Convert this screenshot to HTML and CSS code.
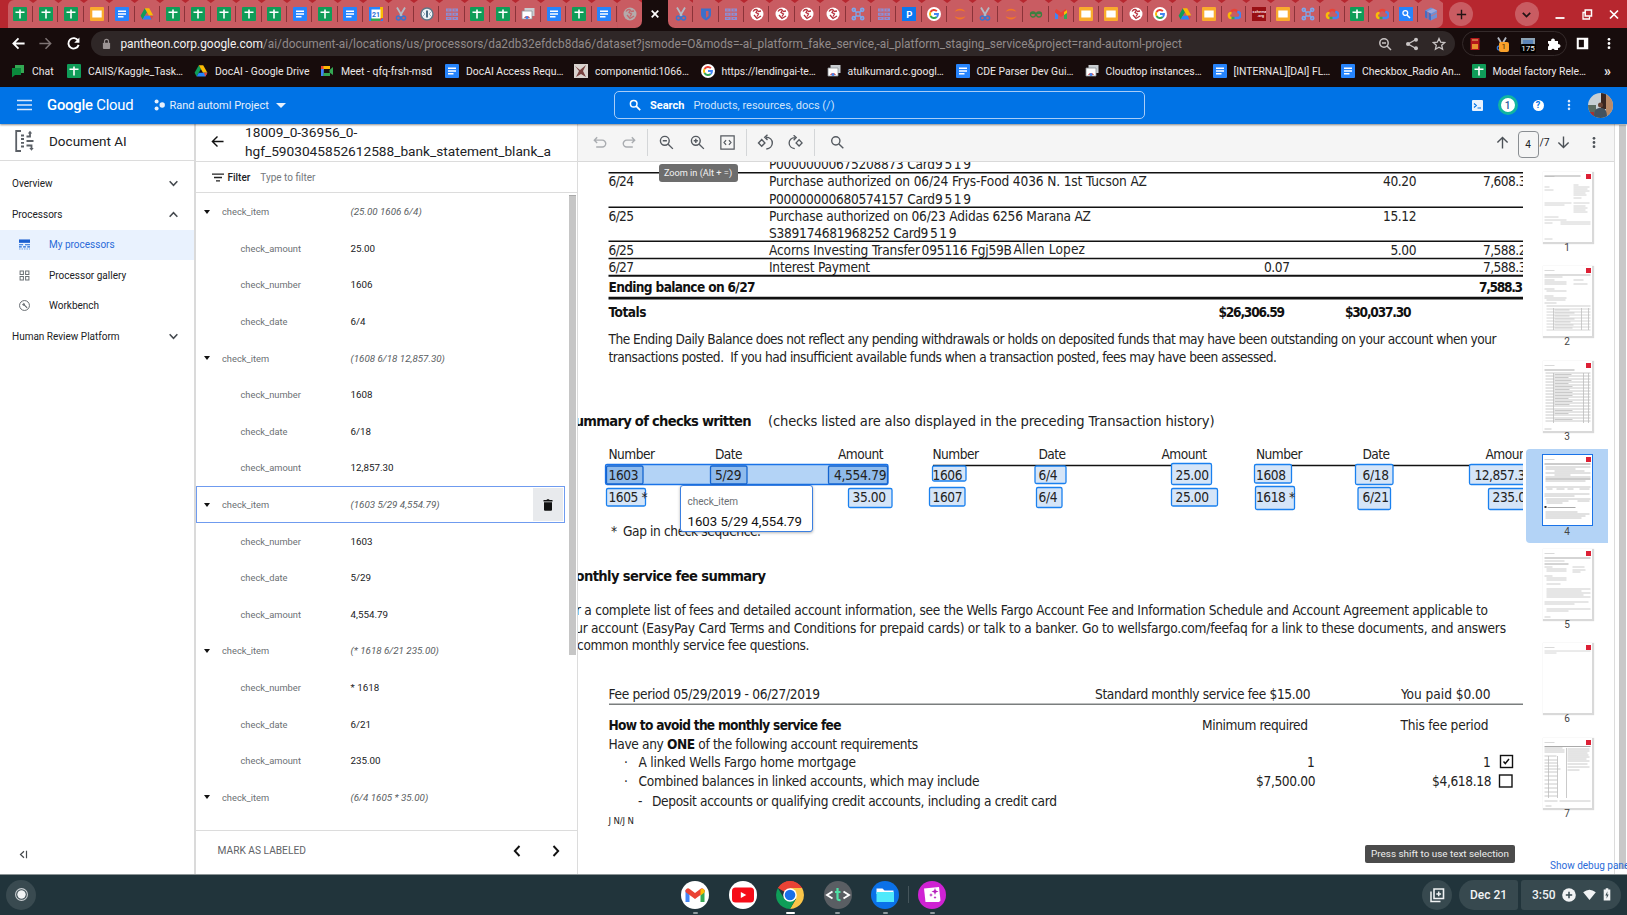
FILE: index.html
```html
<!DOCTYPE html>
<html lang="en">
<head>
<meta charset="utf-8">
<title>Document AI</title>
<link rel="stylesheet" href="styles.css">
</head>
<body>
<svg class="defs" aria-hidden="true">
  <symbol id="sheet" viewBox="0 0 14 14"><rect width="14" height="14" rx="1" fill="#0f9d58"/><path d="M2.5 5.2h9M7 2.5v9" stroke="#fff" stroke-width="1.6"/></symbol>
  <symbol id="docs" viewBox="0 0 14 14"><rect width="14" height="14" rx="1" fill="#2684fc"/><path d="M3 4.2h8M3 7h8M3 9.8h5.5" stroke="#fff" stroke-width="1.4"/></symbol>
  <symbol id="slides" viewBox="0 0 14 14"><rect width="14" height="14" rx="1" fill="#f9ab2d"/><rect x="2.3" y="3.5" width="9.4" height="7" fill="#fff"/></symbol>
  <symbol id="drive" viewBox="0 0 14 14"><path d="M4.8 1.2 0.6 8.8l2 3.6L7 5z" fill="#0f9d58"/><path d="M4.8 1.2h4.4l4.2 7.6H9z" fill="#fbbc04"/><path d="M2.6 12.4 4.8 8.8h8.6l-2 3.6z" fill="#2684fc"/><path d="m9.8 8.8h3.6l-2 3.6z" fill="#ea4335"/></symbol>
  <symbol id="cal" viewBox="0 0 14 14"><path d="M0 0h14v14H0z" fill="#2684fc"/><path d="M11 0h3v11h-3z" fill="#fbbc04"/><path d="M2 11h9v3H2z" fill="#34a853"/><path d="m11 11h3l-3 3z" fill="#ea4335"/><path d="M2.5 2.5h9v9h-9z" fill="#fff"/><text x="3.1" y="9.8" font-size="7" font-weight="700" fill="#2a6fd6">21</text></symbol>
  <symbol id="scissors" viewBox="0 0 14 14"><path d="M3 0.5 8 9M11 0.5 6 9" stroke="#b4bac4" stroke-width="1.8"/><circle cx="4.4" cy="11" r="2" fill="none" stroke="#3975cf" stroke-width="1.4"/><circle cx="9.6" cy="11" r="2" fill="none" stroke="#3975cf" stroke-width="1.4"/></symbol>
  <symbol id="clock" viewBox="0 0 14 14"><circle cx="7" cy="7" r="6" fill="#eef3f6" stroke="#5f7787" stroke-width="1.4"/><path d="M6 3.5h2v7H6z" fill="#4a6a82"/><path d="M2 4 5 7 2 10M12 4 9 7l3 3" stroke="#9db1bf" fill="none"/></symbol>
  <symbol id="grid" viewBox="0 0 14 14"><path d="M1 1.5h12v3H1zM1 5.7h12v3H1zM1 9.9h12v3H1z" fill="#8a8fd6"/><path d="M7 1v12M2.5 3h2M9 3h2M2.5 7.2h2M9 7.2h2M2.5 11.4h2M9 11.4h2" stroke="#d1646f"/></symbol>
  <symbol id="remote" viewBox="0 0 14 14"><path d="M3.5 1h10v8h-10z" fill="#c9cdd1"/><path d="M1 4h10v8H1z" fill="#fff" stroke="#8d9297" stroke-width=".8"/><path d="M3 11a3.2 3.2 0 0 1 6 0z" fill="#ea4335"/><circle cx="6" cy="10.5" r="1.5" fill="#4285f4"/></symbol>
  <symbol id="globe" viewBox="0 0 14 14"><circle cx="7" cy="7" r="6.5" fill="#fff"/><path d="M3 4.5c2-3 4-2 4.500-1L6 5.500l2.500 1.500L7 9.500M8 4.500l3-.5M4 8l3 3.500 4-2.500" stroke="#b8343f" stroke-width="1.300" fill="none"/></symbol>
  <symbol id="globeg" viewBox="0 0 14 14"><circle cx="7" cy="7" r="6.500" fill="#b5aaab"/><path d="M3 4.500c2-3 4-2 4.500-1L6 5.500l2.500 1.500L7 9.500M8 4.500l3-.5M4 8l3 3.500 4-2.500" stroke="#c3696e" stroke-width="1.300" fill="none"/></symbol>
  <symbol id="shield" viewBox="0 0 14 14"><path d="M2 1.500h10v6c0 3-3 5-5 6-2-1-5-3-5-6z" fill="#3d6fc9"/><path d="M7 4h2.500v5L7 11z" fill="#c95b61"/></symbol>
  <symbol id="cmd" viewBox="0 0 14 14"><path d="M5 5h4v4H5zM5 5 2.500 2.500M9 5l2.500-2.500M5 9l-2.500 2.500M9 9l2.500 2.500" stroke="#7ea6ea" stroke-width="1.300" fill="none"/><g fill="none" stroke="#7ea6ea" stroke-width="1.500"><circle cx="2.800" cy="2.800" r="1.600"/><circle cx="11.200" cy="2.800" r="1.600"/><circle cx="2.800" cy="11.200" r="1.600"/><circle cx="11.200" cy="11.200" r="1.600"/></g></symbol>
  <symbol id="pdoc" viewBox="0 0 14 14"><rect width="14" height="14" fill="#0b78f0"/><text x="4.200" y="10.500" font-size="9.500" font-weight="700" fill="#fff">P</text></symbol>
  <symbol id="goog" viewBox="0 0 14 14"><circle cx="7" cy="7" r="7" fill="#fff"/><g fill="none" stroke-width="1.900"><path d="M3.500 5A4 4 0 0 1 9.900 4.200" stroke="#ea4335"/><path d="M3.500 5a4 4 0 0 0 0 4" stroke="#fbbc04"/><path d="M3.500 9a4 4 0 0 0 6.200 1" stroke="#34a853"/><path d="M9.700 10A4 4 0 0 0 11 7H7" stroke="#4285f4"/></g></symbol>
  <symbol id="jup" viewBox="0 0 14 14"><path d="M1.500 5c2-4.500 9-4.500 11 0-3-2-8-2-11 0zM1.500 9c2 4.500 9 4.500 11 0-3 2-8 2-11 0z" fill="#f37726"/></symbol>
  <symbol id="infin" viewBox="0 0 14 14"><g fill="none" stroke="#3b8040" stroke-width="1.300"><circle cx="4" cy="7.500" r="2.500"/><circle cx="10" cy="7.500" r="2.500"/><path d="M1 6.500h12"/></g></symbol>
  <symbol id="gmail" viewBox="0 0 14 14"><path d="M1 3h3v9H1z" fill="#4285f4"/><path d="M10 3h3v9h-3z" fill="#34a853"/><path d="M1 3.500 2.500 2 7 5.500 11.500 2 13 3.500V5.500L7 10 1 5.500z" fill="#ea4335"/><path d="m10 5 3-2v3l-3 2z" fill="#fbbc04"/></symbol>
  <symbol id="cloud" viewBox="0 0 14 14"><g fill="none" stroke-width="2.400"><path d="M4 5c1.500-3 5.500-2.500 6.500 0" stroke="#ea4335"/><path d="M10.300 5a3 3 0 0 1 .5 6H7" stroke="#4285f4"/><path d="M7.500 11H4" stroke="#34a853"/><path d="M4.500 11C1 11 1 6 4.500 6" stroke="#fbbc04"/></g></symbol>
  <symbol id="redbox" viewBox="0 0 14 14"><path d="M0 0h14v14H0z" fill="#990f14"/><text x=".6" y="6" font-size="4" font-weight="700" fill="#f2d9da">schema</text><text x="5" y="10" font-size="4" font-weight="700" fill="#f2d9da">.org</text></symbol>
  <symbol id="lens" viewBox="0 0 14 14"><path d="M0 0h14v14H0z" fill="#2684fc"/><circle cx="6.300" cy="6" r="2.400" fill="none" stroke="#fff" stroke-width="1.300"/><path d="m8 8 3 3" stroke="#fff" stroke-width="1.500"/></symbol>
  <symbol id="cube" viewBox="0 0 14 14"><path d="m7 .5 6 3v7l-6 3-6-3v-7z" fill="#6f8fd6"/><path d="m1 3.500 6 3v7l-6-3z" fill="#456cc0"/><path d="m3 4.500 6-3 4 2-6 3z" fill="#9aa8dc"/><path d="m7 9 6-3M4 5v7" stroke="#c77480"/></symbol>
  <symbol id="chat" viewBox="0 0 14 14"><path d="M4 1h9v8H4z" fill="#34a853"/><path d="M1 4h9v7H4l-3 2.500z" fill="#0a8a3c"/></symbol>
  <symbol id="meet" viewBox="0 0 14 14"><path d="M1 2h3v4H1z" fill="#ea4335"/><path d="M3.500 2H10v3H3.500z" fill="#fbbc04"/><path d="M1 5h2.800v7H1z" fill="#4285f4"/><path d="M3.500 9H10v3H3.500zM9.500 6 13 3v8L9.500 8.500z" fill="#34a853"/></symbol>
  <symbol id="comp" viewBox="0 0 14 14"><path d="M0 0h14v14H0z" fill="#d9d3cf"/><path d="m1 2 5 4 6-5-3 6 3 6-5-3-5 3 3-6z" fill="#77413f"/></symbol>
  <symbol id="chev" viewBox="0 0 10 10"><path d="m1.500 3 3.500 3.700L8.500 3" fill="none" stroke="#454a4f" stroke-width="1.400"/></symbol>
  <symbol id="dots" viewBox="0 0 4 14"><circle cx="2" cy="2.500" r="1.500"/><circle cx="2" cy="7" r="1.500"/><circle cx="2" cy="11.500" r="1.500"/></symbol>
  <symbol id="wf" viewBox="0 0 48 70"><path d="M42.500 2h5v5h-5z" fill="#dd2035"/><path d="M1 4.500h10" stroke="#cfcfcf" stroke-width=".8"/></symbol>
</svg>

<header class="tabstrip">
  <div class="tabs">
    <i class="tab"><svg><use href="#sheet"/></svg></i><i class="tab"><svg><use href="#sheet"/></svg></i><i class="tab"><svg><use href="#sheet"/></svg></i><i class="tab"><svg><use href="#slides"/></svg></i><i class="tab"><svg><use href="#docs"/></svg></i><i class="tab"><svg><use href="#drive"/></svg></i>
    <i class="tab"><svg><use href="#sheet"/></svg></i><i class="tab"><svg><use href="#sheet"/></svg></i><i class="tab"><svg><use href="#sheet"/></svg></i><i class="tab"><svg><use href="#sheet"/></svg></i><i class="tab"><svg><use href="#sheet"/></svg></i><i class="tab"><svg><use href="#docs"/></svg></i><i class="tab"><svg><use href="#sheet"/></svg></i><i class="tab"><svg><use href="#docs"/></svg></i>
    <i class="tab"><svg><use href="#cal"/></svg></i><i class="tab"><svg><use href="#scissors"/></svg></i><i class="tab"><svg><use href="#clock"/></svg></i><i class="tab"><svg><use href="#grid"/></svg></i><i class="tab"><svg><use href="#sheet"/></svg></i><i class="tab"><svg><use href="#sheet"/></svg></i><i class="tab"><svg><use href="#remote"/></svg></i><i class="tab"><svg><use href="#docs"/></svg></i>
    <i class="tab"><svg><use href="#sheet"/></svg></i><i class="tab"><svg><use href="#docs"/></svg></i><i class="tab last"><svg><use href="#globeg"/></svg></i>
    <i class="tab active"><svg viewBox="0 0 14 14"><path d="m3.700 3.700 6.600 6.600M10.300 3.700l-6.600 6.600" stroke="#fff" stroke-width="1.700"/></svg></i>
    <i class="tab first"><svg><use href="#scissors"/></svg></i><i class="tab"><svg><use href="#shield"/></svg></i><i class="tab"><svg><use href="#grid"/></svg></i><i class="tab"><svg><use href="#globe"/></svg></i><i class="tab"><svg><use href="#globe"/></svg></i><i class="tab"><svg><use href="#globe"/></svg></i><i class="tab"><svg><use href="#globe"/></svg></i><i class="tab"><svg><use href="#cmd"/></svg></i>
    <i class="tab"><svg><use href="#grid"/></svg></i><i class="tab"><svg><use href="#pdoc"/></svg></i><i class="tab"><svg><use href="#goog"/></svg></i><i class="tab"><svg><use href="#jup"/></svg></i><i class="tab"><svg><use href="#scissors"/></svg></i><i class="tab"><svg><use href="#jup"/></svg></i><i class="tab"><svg><use href="#infin"/></svg></i><i class="tab"><svg><use href="#gmail"/></svg></i>
    <i class="tab slim"><svg><use href="#slides"/></svg></i><i class="tab slim"><svg><use href="#slides"/></svg></i><i class="tab slim"><svg><use href="#globe"/></svg></i><i class="tab slim"><svg><use href="#goog"/></svg></i><i class="tab slim"><svg><use href="#drive"/></svg></i><i class="tab slim"><svg><use href="#slides"/></svg></i><i class="tab slim"><svg><use href="#cloud"/></svg></i><i class="tab slim"><svg><use href="#redbox"/></svg></i>
    <i class="tab slim"><svg><use href="#slides"/></svg></i><i class="tab slim"><svg><use href="#cmd"/></svg></i><i class="tab slim"><svg><use href="#cloud"/></svg></i><i class="tab slim"><svg><use href="#sheet"/></svg></i><i class="tab slim"><svg><use href="#cloud"/></svg></i><i class="tab slim"><svg><use href="#lens"/></svg></i><i class="tab slim last"><svg><use href="#cube"/></svg></i>
  </div>
  <button class="round"><svg viewBox="0 0 14 14"><path d="M7 2v10M2 7h10" stroke="#231314" stroke-width="1.500"/></svg></button>
  <div class="winctl">
    <button class="round"><svg viewBox="0 0 14 14"><path d="m3 5.200 4 4 4-4" stroke="#231314" stroke-width="1.800" fill="none"/></svg></button>
    <svg viewBox="0 0 14 14"><path d="M2.500 11h9" stroke="#fff" stroke-width="1.800"/></svg>
    <svg viewBox="0 0 14 14"><path d="M5.200 3h6.300v6H5.200z" stroke="#fff" stroke-width="1.500" fill="none"/><path d="M5 5.500H3V12h6.500V9.500" stroke="#fff" stroke-width="1.300" fill="none"/></svg>
    <svg viewBox="0 0 14 14"><path d="m3 3.500 8 8M11 3.500l-8 8" stroke="#fff" stroke-width="1.700"/></svg>
  </div>
</header>

<div class="navbar">
  <svg class="nav-i" viewBox="0 0 16 16"><path d="M14.500 8H2.500M8 2.500 2.500 8 8 13.500" stroke="#fff" stroke-width="1.900" fill="none"/></svg>
  <svg class="nav-i" viewBox="0 0 16 16"><path d="M1.500 8h12M8 2.500 13.500 8 8 13.500" stroke="#7e7474" stroke-width="1.600" fill="none"/></svg>
  <svg class="nav-i" viewBox="0 0 16 16"><path d="M13 5A5.600 5.600 0 1 0 13.500 9.500" stroke="#fff" stroke-width="2" fill="none"/><path d="M14.300 1.500v5.600H8.700z" fill="#fff"/></svg>
  <div class="omnibox">
    <svg class="lock" viewBox="0 0 10 12"><rect x="1" y="4.500" width="8" height="7" rx="1" fill="#9c9494"/><path d="M2.800 5V3a2.200 2.200 0 0 1 4.400 0v2" stroke="#9c9494" stroke-width="1.300" fill="none"/></svg>
    <p class="url"><b>pantheon.corp.google.com</b><span>/ai/document-ai/locations/us/processors/da2db32efdcb8da6/dataset?jsmode=O&amp;mods=-ai_platform_fake_service,-ai_platform_staging_service&amp;project=rand-automl-project</span></p>
    <div class="omni-icons">
      <svg viewBox="0 0 14 14"><g fill="none" stroke="#c9c4c4" stroke-width="1.500"><circle cx="6" cy="6" r="4.200"/><path d="m9 9 4 4M4 6h4"/></g></svg>
      <svg viewBox="0 0 14 14"><path d="M11 2.500 3 7l8 4.500" stroke="#c9c4c4" stroke-width="1.400" fill="none"/><g fill="#c9c4c4"><circle cx="11" cy="2.700" r="2"/><circle cx="3" cy="7" r="2"/><circle cx="11" cy="11.300" r="2"/></g></svg>
      <svg viewBox="0 0 14 14"><path d="m7 1.500 1.700 3.700 4 .4-3 2.700.9 4L7 10.200l-3.600 2.100.9-4-3-2.700 4-.4z" stroke="#c9c4c4" stroke-width="1.300" fill="none"/></svg>
    </div>
  </div>
  <div class="exts">
    <svg viewBox="0 0 14 14"><path d="M2.500 1h9v12h-9z" fill="#b3161b"/><path d="M4 7h6v5H4z" fill="#e8902e"/><path d="M4 3h6" stroke="#e9c26a"/></svg>
    <span class="ext"><svg viewBox="0 0 14 14"><use href="#scissors"/></svg><b class="badge">1</b></span>
    <span class="ext"><svg viewBox="0 0 14 14"><path d="M0 1h14v9H0z" fill="#8ca3b5"/><path d="M2 3h10v5H2z" fill="#5b84b8"/></svg><b class="count">175</b></span>
    <svg viewBox="0 0 14 14"><path d="M1 4h3.200a1.900 1.900 0 1 1 3.600 0H11v3.200a1.900 1.900 0 1 1 0 3.600V13H7.600a1.700 1.700 0 0 0-3.200 0H1V9.600a1.700 1.700 0 0 0 0-3.200z" fill="#fff"/></svg>
  </div>
  <svg class="panel-i" viewBox="0 0 14 14"><path d="M.8.800h12.400v12.400H.8z" fill="#fff"/><path d="M3 3h5.500v8H3z" fill="#170c0c"/></svg>
  <svg class="menu-i" viewBox="0 0 4 14" fill="#fff"><use href="#dots"/></svg>
</div>

<nav class="bookmarks">
  <a><svg><use href="#chat"/></svg>Chat</a>
  <a><svg><use href="#sheet"/></svg>CAIIS/Kaggle_Task…</a>
  <a><svg><use href="#drive"/></svg>DocAI - Google Drive</a>
  <a><svg><use href="#meet"/></svg>Meet - qfq-frsh-msd</a>
  <a><svg><use href="#docs"/></svg>DocAI Access Requ…</a>
  <a><svg><use href="#comp"/></svg>componentid:1066…</a>
  <a><svg><use href="#goog"/></svg>https://lendingai-te…</a>
  <a><svg><use href="#remote"/></svg>atulkumard.c.googl…</a>
  <a><svg><use href="#docs"/></svg>CDE Parser Dev Gui…</a>
  <a><svg><use href="#remote"/></svg>Cloudtop instances…</a>
  <a><svg><use href="#docs"/></svg>[INTERNAL][DAI] FL…</a>
  <a><svg><use href="#docs"/></svg>Checkbox_Radio An…</a>
  <a><svg><use href="#sheet"/></svg>Model factory Rele…</a>
  <b>»</b>
</nav>

<div class="cloudbar">
  <svg class="burger" viewBox="0 0 15 12"><path d="M0 1.500h15M0 6h15M0 10.500h15" stroke="#d9e8fb" stroke-width="1.700"/></svg>
  <div class="brand"><b>Google</b> Cloud</div>
  <div class="project">
    <svg viewBox="0 0 11 12" fill="#e6f0fc"><circle cx="2.600" cy="2.600" r="2"/><circle cx="8.200" cy="6" r="2.700"/><circle cx="2.600" cy="9.400" r="2"/></svg>
    <span>Rand automl Project</span>
    <i class="caret"></i>
  </div>
  <div class="search">
    <svg viewBox="0 0 12 12"><circle cx="4.700" cy="4.700" r="3.300" fill="none" stroke="#fff" stroke-width="1.500"/><path d="m7.200 7.200 4 4" stroke="#fff" stroke-width="1.800"/></svg>
    <b>Search</b><span>Products, resources, docs (/)</span>
  </div>
  <div class="acct">
    <svg class="shell" viewBox="0 0 11 11"><rect width="11" height="11" rx="1" fill="#e9f2fd"/><path d="m2 3.500 2.300 2L2 7.500M5.500 8H9" stroke="#0073e6" stroke-width="1.200" fill="none"/></svg>
    <b class="notif">1</b>
    <b class="help">?</b>
    <svg class="bar-dots" viewBox="0 0 4 14" fill="#dbe9fb"><use href="#dots"/></svg>
    <svg class="avatar" viewBox="0 0 25 25"><clipPath id="av"><circle cx="12.500" cy="12.500" r="12.500"/></clipPath><g clip-path="url(#av)"><path d="M0 0h25v25H0z" fill="#c7cfd4"/><path d="M0 12h8v13H0z" fill="#5b6a5f"/><path d="M13 0h5v16h-5z" fill="#3a2620"/><path d="M18 0h7v25h-7z" fill="#b98a68"/><circle cx="12.500" cy="12" r="2.500" fill="#6a4434"/><path d="M6 25c0-8 2-10 6.500-10s6.500 2 6.500 10z" fill="#43525f"/><path d="M2 19h4v4H2z" fill="#a83030"/></g></svg>
  </div>
</div>

<main class="app">
  <aside class="side">
    <div class="product">
      <svg viewBox="0 0 20 22"><path d="M6 1H1.200v20H6" fill="none" stroke="#5b6066" stroke-width="1.800"/><path d="M6 5.500h3M6 9h3M6 12.800h3M6 16.500h3M11.500 6.500h3.500V2.500M11.500 11h7M11.500 15.500h5v3.500" fill="none" stroke="#5b6066" stroke-width="1.800"/><path d="m12.800 3.500 2.200-2.700 2.200 2.700M14.300 18l2.200 2.700 2.200-2.700" fill="#5b6066"/></svg>
      <span>Document AI</span>
    </div>
    <ul class="menu">
      <li><span>Overview</span><svg><use href="#chev"/></svg></li>
      <li><span>Processors</span><svg class="up"><use href="#chev"/></svg></li>
      <li class="sub on"><svg viewBox="0 0 12 12"><path d="M0 .5h12v3.700H0z" fill="#1a5fd0"/><path d="M0 6.300h4.500M6.500 6.300H12M0 8.600h3M4.500 8.600h3M9 8.600h3" stroke="#1a67d8" stroke-width="1.300"/><path d="M0 10.900h12" stroke="#5a94e6" stroke-dasharray="1.700 1"/></svg><span>My processors</span></li>
      <li class="sub"><svg viewBox="0 0 12 12"><path d="M1.200 1.200h3.600v3.600H1.200zM7.200 1.200h3.600v3.600H7.200zM1.200 7.200h3.600v3.600H1.200zM7.200 7.200h3.600v3.600H7.200z" fill="none" stroke="#6b7075" stroke-width="1.100"/></svg><span>Processor gallery</span></li>
      <li class="sub"><svg viewBox="0 0 12 12"><circle cx="6" cy="6" r="5.400" fill="none" stroke="#5b6066" stroke-width="1"/><path d="m3.800 3 1.700.3 1 1.200-.2.700 3 3-.8.800-3-3-.8.200L3.400 5l.3-.9.800.7.600-.6z" fill="#5b6066"/></svg><span>Workbench</span></li>
      <li><span>Human Review Platform</span><svg><use href="#chev"/></svg></li>
    </ul>
    <svg class="collapse" viewBox="0 0 9 9"><path d="M5 1.200 1.500 4.500 5 7.800M7.500.8v7.400" fill="none" stroke="#45494d" stroke-width="1.200"/></svg>
  </aside>

  <section class="labels">
    <div class="doc-head">
      <svg viewBox="0 0 14 14"><path d="M13.500 7H1.500M7 1.500 1.500 7 7 12.500" fill="none" stroke="#111" stroke-width="1.500"/></svg>
      <h1>18009_0-36956_0-<br>hgf_5903045852612588_bank_statement_blank_a</h1>
    </div>
    <div class="filter">
      <svg viewBox="0 0 12 9"><path d="M0 1.200h12M2 4.500h8M4 7.800h4" stroke="#222" stroke-width="1.300"/></svg>
      <b>Filter</b><span>Type to filter</span>
    </div>
    <div class="rows">
      <div class="row parent"><i class="caret"></i><span>check_item</span><em>(25.00 1606 6/4)</em></div>
      <div class="row"><span>check_amount</span><strong>25.00</strong></div>
      <div class="row"><span>check_number</span><strong>1606</strong></div>
      <div class="row"><span>check_date</span><strong>6/4</strong></div>
      <div class="row parent"><i class="caret"></i><span>check_item</span><em>(1608 6/18 12,857.30)</em></div>
      <div class="row"><span>check_number</span><strong>1608</strong></div>
      <div class="row"><span>check_date</span><strong>6/18</strong></div>
      <div class="row"><span>check_amount</span><strong>12,857.30</strong></div>
      <div class="row parent selected"><i class="caret"></i><span>check_item</span><em>(1603 5/29 4,554.79)</em><button class="trash"><svg viewBox="0 0 10 12"><path d="M.5 1h3L4 .2h2L6.500 1h3v1.400h-9zM1 3.200h8V10.800Q9 11.800 8 11.800H2q-1 0-1-1z" fill="#111"/></svg></button></div>
      <div class="row"><span>check_number</span><strong>1603</strong></div>
      <div class="row"><span>check_date</span><strong>5/29</strong></div>
      <div class="row"><span>check_amount</span><strong>4,554.79</strong></div>
      <div class="row parent"><i class="caret"></i><span>check_item</span><em>(* 1618 6/21 235.00)</em></div>
      <div class="row"><span>check_number</span><strong>* 1618</strong></div>
      <div class="row"><span>check_date</span><strong>6/21</strong></div>
      <div class="row"><span>check_amount</span><strong>235.00</strong></div>
      <div class="row parent"><i class="caret"></i><span>check_item</span><em>(6/4 1605 * 35.00)</em></div>
      <div class="row"><span>check_date</span><strong>6/4</strong></div>
      <i class="scroll"></i>
    </div>
    <div class="label-foot">
      <span>MARK AS LABELED</span>
      <svg viewBox="0 0 8 12"><path d="M6.500 1 1.800 6l4.700 5" fill="none" stroke="#111" stroke-width="1.900"/></svg>
      <svg viewBox="0 0 8 12"><path d="M1.500 1l4.700 5-4.700 5" fill="none" stroke="#111" stroke-width="1.900"/></svg>
    </div>
  </section>

  <section class="viewer">
    <div class="tools">
      <svg viewBox="0 0 16 16" class="t-undo"><path d="M5.500 2.500 2.500 5.500l3 3M2.800 5.500H11a3.400 3.400 0 0 1 0 7.300H4.500" fill="none" stroke="#a9acb0" stroke-width="1.500"/></svg>
      <svg viewBox="0 0 16 16" class="t-redo"><path d="m10.500 2.500 3 3-3 3M13.200 5.500H5a3.400 3.400 0 0 0 0 7.300h6.500" fill="none" stroke="#a9acb0" stroke-width="1.500"/></svg>
      <svg viewBox="0 0 16 16" class="t-out"><g fill="none" stroke="#555a60" stroke-width="1.500"><circle cx="6.200" cy="6.200" r="4.700"/><path d="m9.800 9.800 5 5M4 6.200h4.400"/></g></svg>
      <svg viewBox="0 0 16 16" class="t-in"><g fill="none" stroke="#555a60" stroke-width="1.500"><circle cx="6.200" cy="6.200" r="4.700"/><path d="m9.800 9.800 5 5M4 6.200h4.400M6.200 4v4.400"/></g></svg>
      <svg viewBox="0 0 16 16" class="t-code"><path d="M.9.900h14.200v14.200H.9zM6.500 5.500 4.300 8l2.200 2.500M9.500 5.500 11.700 8l-2.200 2.500" fill="none" stroke="#555a60" stroke-width="1.300"/></svg>
      <svg viewBox="0 0 17 16" class="t-ccw"><path d="m4.700 5 3.200 3.400-3.200 3.400-3.200-3.400zM9 2.800c4 0 6.300 2.500 6.300 5.700s-2.500 5.700-6 6M10.500.2 7.700 2.800l2.800 2.700" fill="none" stroke="#555a60" stroke-width="1.400"/></svg>
      <svg viewBox="0 0 17 16" class="t-cw"><path d="m12.300 5 3.200 3.400-3.200 3.400-3.200-3.400zM8 2.800c-4 0-6.300 2.500-6.300 5.700s2.500 5.700 6 6M6.500.2l2.800 2.600-2.800 2.700" fill="none" stroke="#555a60" stroke-width="1.400"/></svg>
      <svg viewBox="0 0 16 16" class="t-find"><g fill="none" stroke="#555a60" stroke-width="1.500"><circle cx="6.200" cy="6.200" r="4.400"/><path d="m9.500 9.500 4.700 4.700"/></g></svg>
      <div class="pager">
        <svg viewBox="0 0 14 14"><path d="M7 13.500V1.500M1.500 7 7 1.500 12.500 7" fill="none" stroke="#4c5157" stroke-width="1.500"/></svg>
        <span class="page">4</span><span class="of">/7</span>
        <svg viewBox="0 0 14 14"><path d="M7 .5v12M1.500 7 7 12.500 12.500 7" fill="none" stroke="#4c5157" stroke-width="1.500"/></svg>
        <svg class="v-dots" viewBox="0 0 4 14" fill="#4c5157"><use href="#dots"/></svg>
      </div>
    </div>
    <div class="stage">
      <svg class="sheet" viewBox="578 162 944.500 712">
        <g class="rules">
          <path d="M608.500 172.700H1530M608.500 207.300H1530M608.500 241.300H1530M608.500 258.500H1530" stroke-width="1.400"/>
          <path d="M608.500 275.700H1530" stroke-width="2"/>
          <path d="M608.500 298.200H1530" stroke-width="2.800"/>
          <path d="M609 465.500H888M933 465.500H1212M1256.500 465.500H1530" stroke-width="1.300"/>
          <path d="M609 704.200H1530" stroke="#7a7e7e" stroke-width="1.500"/>
        </g>
        <g class="marks">
          <rect class="span" x="605.500" y="464.500" width="282.500" height="20"/>
          <rect class="hit" x="606.500" y="466" width="36.500" height="18"/><rect class="hit" x="710.500" y="466" width="36.500" height="18"/><rect class="hit" x="828.500" y="466" width="59" height="18"/>
          <rect x="606.500" y="488.500" width="39" height="17.500"/><rect x="848.500" y="488.500" width="43.500" height="19"/>
          <rect x="932.500" y="466" width="33.500" height="15"/><rect x="1035" y="466" width="31" height="17.500"/>
          <rect x="929.500" y="487.500" width="35.500" height="18.500"/><rect x="1036.500" y="487.500" width="25.500" height="20"/>
          <rect x="1171.500" y="463.500" width="40" height="21"/><rect x="1171.500" y="488.500" width="46" height="17.500"/>
          <rect x="1254.500" y="464.500" width="37" height="18.500"/><rect x="1255.500" y="486.500" width="39" height="23"/>
          <rect x="1355.500" y="464.500" width="37.500" height="20"/><rect x="1358" y="487.500" width="32.500" height="22"/>
          <rect x="1469.500" y="464.500" width="60" height="20"/><rect x="1488.500" y="488.500" width="40" height="21"/>
        </g>
        <g class="txt">
          <text x="769" y="169" textLength="166">P00000000675208873 Card</text><text x="935" y="169" textLength="36">9519</text>
          <text x="608.500" y="186.300" textLength="25.500">6/24</text><text x="769" y="186.300" textLength="378">Purchase authorized on 06/24 Frys-Food 4036 N. 1st Tucson AZ</text>
          <text x="1383" y="186.300" textLength="33.500">40.20</text><text x="1483" y="186.300" textLength="43.500">7,608.3</text>
          <text x="769" y="203.500" textLength="166">P00000000680574157 Card</text><text x="935" y="203.500" textLength="36">9519</text>
          <text x="608.500" y="220.500" textLength="25.500">6/25</text><text x="769" y="220.500" textLength="322">Purchase authorized on 06/23 Adidas 6256 Marana AZ</text><text x="1383" y="220.500" textLength="33.500">15.12</text>
          <text x="769" y="237.600" textLength="152">S389174681968252 Card</text><text x="920.500" y="237.600" textLength="36">9519</text>
          <text x="608.500" y="254.600" textLength="25.500">6/25</text><text x="769" y="254.600" textLength="151">Acorns Investing Transfer</text><text x="921.500" y="254.600" textLength="46">095116</text><text x="971" y="254.600" textLength="41">Fgj59B</text><text x="1013.500" y="254.300" textLength="71.500">Allen Lopez</text>
          <text x="1390.500" y="254.600" textLength="26">5.00</text><text x="1483" y="254.600" textLength="43.500">7,588.2</text>
          <text x="608.500" y="271.800" textLength="25.500">6/27</text><text x="769" y="271.800" textLength="101">Interest Payment</text><text x="1264" y="271.800" textLength="26">0.07</text><text x="1483" y="271.800" textLength="43.500">7,588.3</text>
          <g class="b"><text x="608.500" y="292.300" textLength="147">Ending balance on 6/27</text><text x="1479" y="292.300" textLength="44">7,588.3</text><text x="608.500" y="316.600" textLength="38">Totals</text><text x="1218.500" y="316.600" textLength="66.500">$26,306.59</text><text x="1345" y="316.600" textLength="66.500">$30,037.30</text></g>
          <text x="608.500" y="344.400" textLength="888">The Ending Daily Balance does not reflect any pending withdrawals or holds on deposited funds that may have been outstanding on your account when your</text>
          <text x="608.500" y="361.700" textLength="668.500" xml:space="preserve">transactions posted.  If you had insufficient available funds when a transaction posted, fees may have been assessed.</text>
          <g class="h"><text class="b" x="566" y="426" textLength="185.500">Summary of checks written</text><text x="768" y="426" textLength="446.500">(checks listed are also displayed in the preceding Transaction history)</text></g>
          <text x="608.500" y="459.400" textLength="46.500">Number</text><text x="715" y="459.400" textLength="27.500">Date</text><text x="838" y="459.400" textLength="45.500">Amount</text>
          <text x="932.500" y="459.400" textLength="46.500">Number</text><text x="1038.500" y="459.400" textLength="27.500">Date</text><text x="1161.500" y="459.400" textLength="45.500">Amount</text>
          <text x="1256" y="459.400" textLength="46.500">Number</text><text x="1362.500" y="459.400" textLength="27.500">Date</text><text x="1485.500" y="459.400" textLength="45.500">Amount</text>
          <text x="608.500" y="480" textLength="30">1603</text><text x="715" y="480" textLength="26.500">5/29</text><text x="834" y="480" textLength="52.500">4,554.79</text>
          <text x="932.500" y="480" textLength="30">1606</text><text x="1038.500" y="480" textLength="19">6/4</text><text x="1175.500" y="480" textLength="33.500">25.00</text>
          <text x="1256" y="480" textLength="30">1608</text><text x="1362.500" y="480" textLength="26.500">6/18</text><text x="1474.500" y="480" textLength="51">12,857.3</text>
          <text x="608.500" y="502.400" textLength="39">1605 *</text><text x="852.500" y="502.400" textLength="33.500">35.00</text>
          <text x="932.500" y="502.400" textLength="30">1607</text><text x="1038.500" y="502.400" textLength="19">6/4</text><text x="1175.500" y="502.400" textLength="33.500">25.00</text>
          <text x="1256" y="502.400" textLength="39">1618 *</text><text x="1362.500" y="502.400" textLength="26.500">6/21</text><text x="1492.500" y="502.400" textLength="33.500">235.0</text>
          <text x="611" y="535.600">*</text><text x="623" y="535.600" textLength="138">Gap in check sequence.</text>
          <text class="h b" x="563" y="581.400" textLength="203">Monthly service fee summary</text>
          <text x="562.500" y="615.200" textLength="925.500">For a complete list of fees and detailed account information, see the Wells Fargo Account Fee and Information Schedule and Account Agreement applicable to</text>
          <text x="562.500" y="632.500" textLength="943.500">Your account (EasyPay Card Terms and Conditions for prepaid cards) or talk to a banker. Go to wellsfargo.com/feefaq for a link to these documents, and answers</text>
          <text x="562.500" y="649.600" textLength="247">of common monthly service fee questions.</text>
          <text x="608.500" y="699.300" textLength="211.500">Fee period 05/29/2019 - 06/27/2019</text><text x="1095" y="699.300" textLength="215.500">Standard monthly service fee $15.00</text><text x="1401" y="699.300" textLength="89.500">You paid $0.00</text>
          <text class="b" x="608.500" y="730.300" textLength="233">How to avoid the monthly service fee</text><text x="1202" y="729.700" textLength="106">Minimum required</text><text x="1400.500" y="729.700" textLength="88">This fee period</text>
          <text x="608.500" y="748.700" textLength="309.500">Have any <tspan class="b">ONE</tspan> of the following account requirements</text>
          <text x="624" y="766.700">·</text><text x="638.500" y="766.700" textLength="217.500">A linked Wells Fargo home mortgage</text><text x="1307" y="766.700" textLength="7.500">1</text><text x="1483" y="766.700" textLength="7.500">1</text>
          <text x="624" y="785.700">·</text><text x="638.500" y="785.700" textLength="341">Combined balances in linked accounts, which may include</text><text x="1256" y="785.700" textLength="59.500">$7,500.00</text><text x="1432" y="785.700" textLength="59.500">$4,618.18</text>
          <text x="638" y="806">-</text><text x="652" y="806" textLength="405">Deposit accounts or qualifying credit accounts, including a credit card</text>
          <text class="s" x="608.500" y="823.700" textLength="25.500">J N/J N</text>
        </g>
        <g fill="none" stroke="#111" stroke-width="1.400"><rect x="1500.500" y="755.500" width="12" height="12"/><rect x="1499.500" y="775" width="12.500" height="12"/></g>
        <path d="m1503.500 761.500 1.800 2 3.700-4.500" fill="none" stroke="#111" stroke-width="1.500"/>
      </svg>
      <div class="entity"><small>check_item</small><span>1603 5/29 4,554.79</span></div>
      <div class="hint">Press shift to use text selection</div>
      <ol class="thumbs">
        <li><svg viewBox="0 0 48 70"><use href="#wf"/><path d="M1 4h36" stroke="#aaa"/><g stroke="#c6c6c6" stroke-width=".8"><path d="M1 15h5M1 18h9M30 13h5M30 15h16M30 17h14M30 19h16M30 21h12M30 23h13M30 26h8M1 31h27M1 33h20M30 31h16M30 34h12M30 36h14M30 38h12M30 40h14M1 45h14M1 48h22M1 51h8M17 50h30M17 52h30M1 67h8"/></g></svg>1</li>
        <li><svg viewBox="0 0 48 70"><use href="#wf"/><path d="M1 9h46" stroke="#bbb"/><g stroke="#c0c0c0" stroke-width=".8"><path d="M1 11h18M1 14h10M1 16h22M1 18h22M30 14h10M30 18h14M1 23h10M3 25h20M1 30h9M1 32h22M3 34h19M1 37h12M3 40h44"/><path d="M3 43h44M3 46h44M3 49h44M3 52h44M3 55h44M3 58h44M3 61h44M3 64h44" stroke="#ccc"/><path d="M11 44h15M11 47h20M11 50h15M11 53h20M11 56h16M11 59h19M11 62h18M38 42v22M45 42v22M10 42v22"/></g></svg>2</li>
        <li><svg viewBox="0 0 48 70"><use href="#wf"/><path d="M1 9h30" stroke="#aaa"/><g stroke="#bdbdbd" stroke-width=".8"><path d="M2 12h45M2 15h45M2 18h45M2 21h45M2 24h45M2 27h45M2 30h45M2 33h45M2 36h45M2 39h45M2 42h45M2 45h45M2 48h45M2 51h45M2 54h45M2 57h45M2 60h45"/><path d="M11 13.500h17M11 16.500h14M11 19.500h17M11 22.500h14M11 25.500h18M11 28.500h15M11 31.500h18M11 34.500h18M11 37.500h14M11 40.500h18M11 43.500h15M11 49.500h18M11 52.500h14M11 58.500h18M10 12v50M40 12v50M45 12v50M1 68h7"/></g></svg>3</li>
        <li class="cur"><svg viewBox="0 0 48 70"><use href="#wf"/><path d="M1 9h46M2 24h45" stroke="#999"/><g stroke="#b5b5b5" stroke-width=".8"><path d="M2 12h45M2 14h30M11 16h30M2 18h45M11 20h16M2 22h45M2 26h40M2 32h45M3 34h6M13 34h8M24 34h6M36 34h10M1 39h45M1 41h30M2 44h45M3 46h22M3 48h16M34 46h12M2 57h32M2 59h44M2 61h40M2 63h36"/></g><path d="M1 51h2v2H1z" fill="#333"/><path d="M4 52.500h28" stroke="#aaa"/></svg>4</li>
        <li><svg viewBox="0 0 48 70"><use href="#wf"/><path d="M1 9h46M1 15h24" stroke="#aaa"/><g stroke="#c0c0c0" stroke-width=".8"><path d="M1 12h20M1 18h8M3 20h20M3 22h20M29 18h12M29 21h13M29 23h8M1 27h8M3 29h20M3 31h20M3 35h14M3 40h44M3 42h35M3 44h44M3 46h37M3 48h44M1 53h44M1 55h30M3 60h44M3 62h22M1 68h6"/></g></svg>5</li>
        <li><svg viewBox="0 0 48 70"><use href="#wf"/><path d="M1 8h46M1 10h12" stroke="#ccc" stroke-width=".8"/></svg>6</li>
        <li><svg viewBox="0 0 48 70"><use href="#wf"/><path d="M1 8.500h46" stroke="#aaa"/><g stroke="#bdbdbd" stroke-width=".8"><path d="M1 10h18M1 12h20M1 14h20M1 18h12M1 22h13M1 25h13M1 28h14M1 31h16M1 34h13M1 38h13M1 42h13M1 46h13M1 50h13M1 54h13M1 58h13M1 63h13M16 63h31M14 18v42M5 18v42M23 10v50M24 11h22M24 13h22M24 15h20M24 17h21M24 19h22M24 21h19M24 23h22M24 26h20M24 29h22M24 32h12M2 68h6"/></g></svg>7</li>
      </ol>
    </div>
    <div class="tip">Zoom in (Alt + =)</div>
    <a class="debug">Show debug panel</a>
  </section>
  <i class="page-scroll"></i>
</main>

<footer class="shelf">
  <span class="launcher"><svg viewBox="0 0 16 16"><circle cx="8" cy="8" r="6.300" fill="none" stroke="#c9ced1" stroke-width="1.200"/><circle cx="8" cy="8" r="4.500" fill="#f1f3f4"/></svg></span>
  <div class="apps">
    <span class="app-i"><svg viewBox="0 0 28 28"><circle cx="14" cy="14" r="14" fill="#fff"/><path d="M4.500 9h4v12h-4z" fill="#4285f4"/><path d="M19.500 9h4v12h-4z" fill="#34a853"/><path d="M4.500 9q2-3 4.500-.8L14 12l5-3.800q2.500-2.200 4.500.8v2L14 18 4.500 11z" fill="#ea4335"/><path d="M19.500 8.200q4-1.500 4 1.800v1.500l-4 3z" fill="#fbbc04"/></svg></span>
    <span class="app-i none"><svg viewBox="0 0 28 28"><circle cx="14" cy="14" r="14" fill="#fff"/><rect x="3" y="6.500" width="22" height="15" rx="3.500" fill="#f60c18"/><path d="m11.800 11 5.500 3-5.500 3z" fill="#fff"/></svg></span>
    <span class="app-i act"><svg viewBox="0 0 28 28"><path d="M14 14 1.900 7A14 14 0 0 1 26.100 7z" fill="#ea4335"/><path d="M14 14V7h12.100A14 14 0 0 1 14 28l6-10z" fill="#fbc548"/><path d="M14 14l6 3.500L14 28A14 14 0 0 1 1.900 7L8 17.500z" fill="#0f9d58"/><path d="M1.900 7A14 14 0 0 1 26.100 7H14z" fill="#ea4335"/><circle cx="14" cy="14" r="6.800" fill="#fff"/><circle cx="14" cy="14" r="5.300" fill="#1a6fe8"/></svg></span>
    <span class="app-i"><svg viewBox="0 0 28 28"><circle cx="14" cy="14" r="14" fill="#5a5e63"/><path d="m8.500 10.500-5.500 3.500 5.500 3.500M19.500 10.500 25 14l-5.500 3.500" fill="none" stroke="#fff" stroke-width="1.900"/><path d="M13.500 7v10.500q0 2 3 1.500M11 11h5.500" fill="none" stroke="#4fe0a5" stroke-width="2.200"/></svg></span>
    <span class="app-i"><svg viewBox="0 0 28 28"><circle cx="14" cy="14" r="14" fill="#0b71e8"/><path d="M5.500 7.500h6l2 2h9V13h-17z" fill="#fff"/><path d="M5.500 11h17.500v10h-17.500z" fill="#4fe9fb"/></svg></span>
    <i class="sep"></i>
    <span class="app-i"><svg viewBox="0 0 28 28"><circle cx="14" cy="14" r="14" fill="#cf22d3"/><path d="m6 7.500 15-1.500 1.500 13.500-1.500 1.500H7.500z" fill="#fff"/><path d="m17 7 .9 2.600 2.600.9-2.600.9L17 14l-.9-2.600-2.600-.9 2.600-.9zM13 12l.6 1.400 1.400.6-1.400.6-.6 1.400-.6-1.400-1.400-.6 1.400-.6zM17 15l.5 1 1 .5-1 .5-.5 1-.5-1-1-.5 1-.5z" fill="#b51fbb"/></svg></span>
  </div>
  <div class="status">
    <span class="cap"><svg viewBox="0 0 16 16"><path d="M5 2h9.500v9.500H5z" fill="none" stroke="#f1f3f4" stroke-width="1.600"/><path d="M2 4.500V14.500h9.500M9.700 4.500v4.800M7.300 6.900h4.800" fill="none" stroke="#f1f3f4" stroke-width="1.500"/></svg></span>
    <span class="date">Dec 21</span>
    <span class="clock">3:50
      <svg class="c14" viewBox="0 0 14 14"><circle cx="7" cy="7" r="6.800" fill="#f1f3f4"/><path d="M7 3.800v6.400M3.800 7h6.400" stroke="#37494f" stroke-width="1.500"/></svg>
      <svg class="c13" viewBox="0 0 13 11"><path d="M6.500 11 .2 3.200Q6.500-1.800 12.800 3.200z" fill="#f1f3f4"/></svg>
      <svg class="c8" viewBox="0 0 8 13"><path d="M2.700.2h2.600v1.300H7.300v11H.7v-11h2z" fill="#f1f3f4"/><path d="M4.500 3.300 2.300 7.500h1.500L3.500 10.700 5.700 6.500H4.200z" fill="#37494f"/></svg>
    </span>
  </div>
</footer>
</body>
</html>
```
FILE: styles.css
```css
* { box-sizing: border-box; }
html, body { margin: 0; height: 915px; overflow: hidden; }
body { display: flex; flex-direction: column; width: 1627px; background: #fff; color: #202124; font-family: Roboto, "Noto Sans", sans-serif; font-size: 10px; }
svg { display: block; flex: none; }
button { border: 0; padding: 0; background: none; font: inherit; }
ul, ol, p, h1 { margin: 0; padding: 0; list-style: none; font-weight: 400; }
i { font-style: normal; }
.defs { position: absolute; width: 0; height: 0; }

/* browser tabs */
.tabstrip { display: flex; align-items: center; height: 28px; background: #b7272f; }
.tabs { display: flex; width: 1443px; height: 28px; padding-left: 7.7px; flex: none; margin-right: 6px; }
.tab { position: relative; display: grid; place-items: center; width: 25.4px; height: 28px; background: #c95c62; flex: none; }
.tab.slim { width: 24.6px; }
.tab svg { width: 14px; height: 14px; }
.tab::after { content: ""; position: absolute; right: 0; top: 6px; width: 1px; height: 16px; background: #8b3339; }
.tab::before { content: ""; position: absolute; right: -4px; top: 0; width: 8px; height: 3px; background: #b7272f; clip-path: polygon(0 0, 100% 0, 50% 100%); z-index: 1; }
.tab:first-child { border-radius: 6px 0 0 0; }
.tab.last { border-radius: 0 0 7px 0; }
.tab.first { border-radius: 0 0 0 7px; }
.tab.active { background: #170c0c; box-shadow: 0 0 0 0 #170c0c; }
.tab.active::after, .tab.last::after, .tab.active::before { display: none; }
.tab.last:not(.slim) { box-shadow: 7px 7px 0 #170c0c; }
.tab.last:not(.slim), .tab.first { clip-path: inset(0); }
.tabs { background: linear-gradient(90deg, #b7272f 630px, #170c0c 630px, #170c0c 680px, #b7272f 680px); }
.round { display: grid; place-items: center; width: 24px; height: 24px; border-radius: 50%; background: #c95c62; }
.round svg { width: 13px; height: 13px; }
.winctl { display: flex; align-items: center; margin-left: auto; padding-right: 6.500px; }
.winctl > svg { width: 14px; height: 14px; margin-left: 13px; }
.winctl .round { margin-right: 1px; }

/* address bar */
.navbar { display: flex; align-items: center; height: 31px; padding-left: 11px; background: #170c0c; }
.nav-i { width: 15px; height: 15px; margin-right: 12.300px; }
.omnibox { display: flex; align-items: center; width: 1364px; height: 25px; padding: 0 9px 0 11px; margin-left: -1.500px; background: #2f2727; border-radius: 13px; flex: none; }
.lock { width: 9px; height: 12px; }
.url { margin-left: 9px; font-size: 11.900px; white-space: nowrap; color: #918a8a; }
.url b { color: #f4f1f1; font-weight: 400; }
.omni-icons { display: flex; gap: 13px; margin-left: auto; }
.omni-icons svg { width: 14px; height: 14px; }
.exts { display: flex; align-items: center; justify-content: space-between; width: 105px; height: 25px; margin-left: 7px; padding: 0 5px; border: 1px solid #342a2a; border-radius: 13px; }
.exts svg { width: 14px; height: 14px; }
.ext { position: relative; }
.badge { position: absolute; left: 4px; top: 5px; width: 10px; height: 10px; border-radius: 2px; background: #f9a12b; color: #4a2b00; font-size: 8px; line-height: 10px; text-align: center; font-weight: 400; }
.count { position: absolute; left: -1px; top: 7px; width: 16px; height: 9px; border-radius: 2px; background: #000; color: #fff; font-size: 8px; line-height: 9px; text-align: center; font-weight: 400; }
.panel-i { width: 13px; height: 13px; margin-left: 8.500px; }
.menu-i { width: 4px; height: 13px; margin-left: 18.500px; }

/* bookmarks */
.bookmarks { display: grid; grid-template-columns: 56px 127px 126px 125px 129px 126.500px 126px 129px 129px 128px 128.500px 130.500px 127.500px auto; align-items: center; height: 28px; padding: 0 0 4px 11px; background: #170c0c; color: #ece8e8; font-size: 10.400px; white-space: nowrap; }
.bookmarks a { display: flex; align-items: center; gap: 7px; }
.bookmarks svg { width: 14px; height: 14px; }
.bookmarks b { margin-left: 5px; font-size: 14px; line-height: 14px; }

/* cloud console bar */
.cloudbar { position: relative; z-index: 2; display: flex; align-items: center; height: 36.500px; padding-left: 17px; background: #0073e6; color: #fff; box-shadow: 0 1px 2px rgba(0,0,0,.45); flex: none; }
.burger { width: 15px; height: 12px; }
.brand { width: 89px; margin-left: 15px; font-size: 14.800px; font-weight: 400; letter-spacing: -.2px; white-space: nowrap; }
.brand b { font-weight: 500; }
.project { display: flex; align-items: center; width: 460.500px; margin-left: 17.500px; font-size: 11px; color: #e6f0fc; }
.project svg { width: 11px; height: 12px; margin-right: 5px; }
.project .caret { margin-left: 7px; border-width: 5px 5px 0; border-color: #e6f0fc transparent; }
.caret { width: 0; height: 0; border-style: solid; border-width: 4px 3px 0; border-color: #111 transparent; }
.search { display: flex; align-items: center; width: 531px; height: 28px; padding-left: 14px; border: 1.500px solid #a9cdf7; border-radius: 5px; font-size: 11px; }
.search svg { width: 12px; height: 12px; }
.search b { margin: 0 9px; font-weight: 700; }
.search span { color: #cfe3fb; }
.acct { display: flex; align-items: center; margin-left: auto; padding-right: 14.500px; }
.shell { width: 11px; height: 11px; margin-right: 15px; }
.notif { display: grid; place-items: center; width: 20px; height: 20px; border: 3px solid #12b5a0; border-radius: 50%; background: #fff; color: #28559a; font-size: 10px; font-weight: 500; }
.help { display: grid; place-items: center; width: 11px; height: 11px; margin: 0 23px 0 15px; border-radius: 50%; background: #fff; color: #0073e6; font-size: 9px; }
.bar-dots { width: 4px; height: 12px; margin-right: 17px; }
.avatar { width: 25px; height: 25px; }

/* application body */
.app { position: relative; display: flex; flex: 1; min-height: 0; border-bottom: 1px solid #8c9496; }
.side { position: relative; width: 195.500px; border-right: 2px solid #dadada; flex: none; }
.product { display: flex; align-items: center; height: 37.500px; padding: 0 0 1px 15px; border-bottom: 1px solid #dcdcdc; font-size: 13.500px; }
.product svg { width: 20px; height: 22px; margin-right: 14px; }
.menu { margin-top: 7.500px; }
.menu li { display: flex; align-items: center; justify-content: space-between; height: 30.500px; padding: 0 15px 0 12px; }
.menu li > svg { width: 11px; height: 11px; }
.menu .up { transform: scaleY(-1); }
.menu .sub { justify-content: flex-start; padding-left: 19px; }
.menu .sub > svg { margin-right: 19px; }
.menu .on { background: #e9f2fe; color: #2a6bd8; }
.collapse { position: absolute; left: 19px; bottom: 15px; width: 9px; height: 9px; }

.labels { display: flex; flex-direction: column; width: 382.500px; border-right: 1px solid #dcdcdc; flex: none; }
.doc-head { display: flex; align-items: center; height: 38.500px; padding: 0 0 1px 15px; border-bottom: 1px solid #dcdcdc; }
.doc-head svg { width: 13px; height: 13px; margin-right: 21.500px; }
.doc-head h1 { font-size: 13.700px; line-height: 18.500px; white-space: nowrap; }
.filter { display: flex; align-items: center; height: 31px; padding-left: 16px; border-bottom: 1px solid #dcdcdc; }
.filter svg { width: 12px; height: 9px; }
.filter b { margin: 0 10px 0 4px; font-weight: 500; }
.filter span { color: #74787c; }
.rows { position: relative; flex: 1; min-height: 0; overflow: hidden; padding-top: .5px; }
.row { display: flex; align-items: center; height: 36.600px; width: 369.500px; padding-left: 45px; color: #202124; }
.row span { width: 110px; color: #6b6f73; font-size: 9.300px; }
.row strong { font-weight: 400; font-size: 9.800px; }
.row em { font-size: 9.800px; color: #5a5e62; }
.row.parent { padding-left: 8px; }
.row.parent span { width: 128.500px; margin-left: 12.500px; }
.row.selected { padding-left: 7px; border: 1px solid #6f9bef; }
.trash { display: grid; place-items: center; width: 30px; height: 33px; margin-left: auto; margin-right: 1px; background: #e8eaed; }
.trash svg { width: 10px; height: 12px; }
.scroll { position: absolute; right: 1px; top: 1.500px; width: 7px; height: 460px; background: #c6c6c6; border-top: 1px solid #aaa; }
.label-foot { display: flex; align-items: center; height: 43.500px; padding: 0 17px 3px 22px; border-top: 1px solid #dcdcdc; border-bottom: 0; }
.label-foot span { flex: 1; color: #5f6368; font-size: 10.200px; }
.label-foot svg { width: 8px; height: 12px; margin-left: 31px; }

.viewer { position: relative; display: flex; flex-direction: column; width: 1037px; border-right: 1px solid #dcdcdc; flex: none; }
.tools { display: flex; align-items: center; height: 38.500px; padding-left: 14px; background: #f5f5f5; border-bottom: 1px solid #d9d9d9; flex: none; }
.tools svg { width: 15px; height: 15px; }
.t-redo { margin-left: 14.500px; }
.t-redo + svg { margin-left: 10px; }
.tools .t-out { box-sizing: content-box; height: 27px; padding-left: 11px; border-left: 1px solid #d4d6d8; }
.t-in { margin-left: 16px; }
.t-code { margin-left: 15.500px; }
.tools .t-ccw { box-sizing: content-box; width: 17px; height: 27px; margin-left: 10.500px; padding-left: 10px; border-left: 1px solid #d4d6d8; }
.tools .t-cw { width: 17px; margin-left: 13px; }
.tools .t-find { box-sizing: content-box; height: 27px; margin-left: 10.500px; padding-left: 15px; border-left: 1px solid #d4d6d8; }
.pager { display: flex; align-items: center; margin-left: auto; padding-right: 18.500px; }
.pager svg { width: 13px; height: 13px; }
.page { display: grid; place-items: center; width: 21px; height: 27px; margin: 4px 1px 0 9px; border: 1px solid #8a8e92; border-radius: 4px; }
.of { width: 17px; font-size: 10.500px; }
.pager .v-dots { width: 4px; margin-left: 22px; }
.stage { position: relative; display: flex; flex: 1; min-height: 0; background: #fff; }
.sheet { width: 944.500px; height: 712px; }
.sheet .rules path { stroke: #111; }
.sheet .rules path:last-child { stroke: #7a7e7e; }
.txt text { font-family: "DejaVu Sans Condensed", "DejaVu Sans", sans-serif; font-stretch: condensed; font-size: 13.600px; fill: #222; }
.txt .b, .txt .b text { font-weight: 700; fill: #111; }
.txt .h text, .txt text.h { font-size: 14.600px; }
.txt text.s { font-size: 9.500px; }
.marks rect { fill: #d5e5f8; stroke: #1a80ee; stroke-width: 1.300; rx: 1.500px; }
.marks .span { fill: #b3d3f6; stroke: #1a73e8; }
.marks .hit { fill: #8fbbec; stroke: #1464cf; }
.entity { position: absolute; left: 102px; top: 323px; display: flex; flex-direction: column; width: 133px; height: 47px; padding: 10px 0 0 6.500px; background: #fff; border: 1px solid #3b7fe0; border-radius: 3px; box-shadow: 0 1px 3px rgba(0,0,0,.3); white-space: nowrap; }
.entity small { font-size: 10px; line-height: 12px; color: #6b6f73; }
.entity span { margin-top: 6px; font-size: 13.200px; line-height: 16px; color: #111; }
.hint { position: absolute; left: 787px; top: 683px; width: 150px; height: 18px; border-radius: 2px; background: #4b4b4b; color: #eee; font-size: 9.900px; line-height: 17px; text-align: center; white-space: nowrap; }
.tip { position: absolute; left: 80.500px; top: 40.500px; width: 79px; height: 18px; border-radius: 3px; background: #6d6d6d; color: #f2f2f2; font-size: 9.200px; line-height: 17px; text-align: center; }
.debug { position: absolute; left: 972px; bottom: 2px; color: #2a6bd8; font-size: 10px; line-height: 12px; white-space: nowrap; z-index: 3; }
.thumbs { width: 82px; margin: 4px 0 0 3.500px; font-size: 10px; color: #444; }
.thumbs li { display: flex; flex-direction: column; align-items: center; height: 94.300px; padding: 6px 0 0 0; line-height: 11px; }
.thumbs svg { width: 49px; height: 70px; background: #fff; box-shadow: 1px 1px 1px 1px #d9d9d9; }
.thumbs .cur { padding-top: 5px; background: #b3d3f6; border-radius: 4px 0 0 4px; }
.thumbs .cur svg { width: 51px; height: 72px; border: 1px solid #1a73e8; box-shadow: none; }
.page-scroll { margin: 1px 0 5px 4px; width: 7px; background: #c8c8c8; }

/* system shelf */
.shelf { display: grid; grid-template-columns: 1fr auto 1fr; align-items: center; height: 40.500px; padding: 0 6px; background: #21343b; color: #f1f3f4; flex: none; }
.launcher { display: grid; place-items: center; width: 30px; height: 30px; border-radius: 50%; background: #394a50; }
.launcher svg { width: 15px; height: 15px; }
.apps { display: flex; align-items: center; gap: 19.500px; height: 40px; }
.app-i { position: relative; }
.app-i svg { width: 28px; height: 28px; }
.app-i::after { content: ""; position: absolute; left: 11.500px; bottom: -5.500px; width: 5px; height: 2px; background: #8f999d; border-radius: 1px; }
.app-i.none::after { display: none; }
.app-i.act::after { left: 9.500px; width: 9px; background: #fff; }
.sep { width: 1px; height: 17px; margin: 0 -10.500px; background: #45555b; }
.status { display: flex; align-items: center; justify-content: flex-end; font-size: 12px; font-weight: 500; }
.cap { display: grid; place-items: center; width: 30px; height: 30px; margin-right: 7px; border-radius: 50%; background: #37494f; }
.cap svg { width: 16px; height: 16px; }
.date { width: 59px; height: 30px; line-height: 30px; padding-left: 11px; border-radius: 15px 3px 3px 15px; background: #37494f; }
.clock { display: flex; align-items: center; width: 100px; height: 30px; margin-left: 3px; padding-left: 11px; border-radius: 3px 15px 15px 3px; background: #37494f; }
.c14 { width: 14px; height: 14px; margin-left: 6px; }
.c13 { width: 13px; height: 11px; margin-left: 7px; }
.c8 { width: 8px; height: 13px; margin-left: 7px; }
```
